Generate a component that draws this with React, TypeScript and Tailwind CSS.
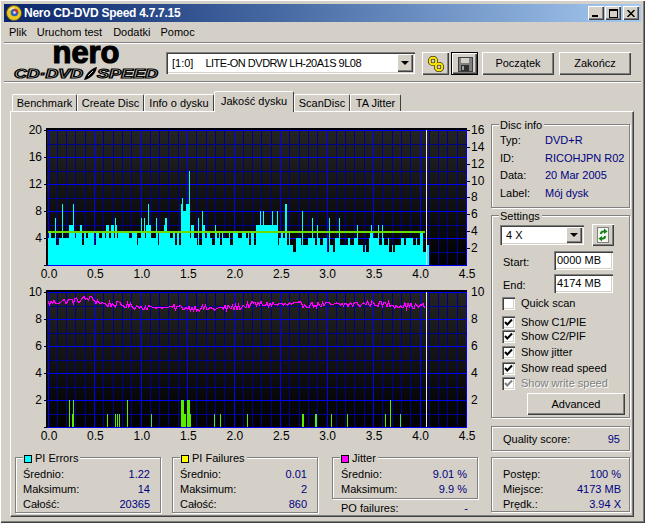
import type { ReactNode } from "react";

const raised = "bg-[#d4d0c8] shadow-[inset_1px_1px_0_#fff,inset_-1px_-1px_0_#404040,inset_-2px_-2px_0_#808080]";
const sunken = "bg-white shadow-[inset_1px_1px_0_#808080,inset_2px_2px_0_#404040,inset_-1px_-1px_0_#fff,inset_-2px_-2px_0_#d4d0c8]";
const etched = "relative border border-[#808080] shadow-[inset_1px_1px_0_#fff,1px_1px_0_#fff]";

// pseudo random so the picture is the same on every load
function makeRandom(seed: number) {
  let s = seed;
  return () => {
    s = (s * 1664525 + 1013904223) % 4294967296;
    return s / 4294967296;
  };
}

function pick(r: number, table: [number, number][]) {
  let sum = 0;
  for (const [v, p] of table) {
    sum += p;
    if (r < sum) return v;
  }
  return table[table.length - 1][0];
}

function buildErrors() {
  const rnd = makeRandom(77);
  const out: number[] = [];
  let x = 48;
  while (x <= 426) {
    const run = 1 + Math.floor(rnd() * 3);
    let table: [number, number][];
    if (x < 210) table = [[3, 0.14], [4, 0.36], [5, 0.36], [6, 0.12], [2, 0.02]];
    else if (x < 256) table = [[3, 0.25], [4, 0.35], [5, 0.3], [6, 0.1]];
    else if (x < 277) table = [[6, 1]];
    else if (x < 330) table = [[3, 0.5], [4, 0.35], [5, 0.1], [2, 0.05]];
    else table = [[3, 0.58], [4, 0.24], [5, 0.08], [2, 0.1]];
    const v = pick(rnd(), table);
    for (let i = 0; i < run; i++) out[x++ - 48] = v;
  }
  const spikes: [number, number][] = [
    [55, 7], [62, 9], [73, 9], [115, 7], [141, 7], [144, 7], [148, 9], [156, 7], [165, 7], [166, 7],
    [181, 9], [182, 10], [183, 8], [184, 8], [185, 8], [186, 9], [187, 9], [188, 9], [189, 14], [198, 7], [202, 8],
    [260, 8], [263, 8], [272, 8], [277, 8], [285, 9], [286, 9], [302, 8], [312, 7], [317, 6], [329, 7], [339, 7],
    [357, 6], [371, 6], [378, 6], [382, 6],
  ];
  for (const [px, v] of spikes) out[px - 48] = v;
  return out;
}

function buildJitter() {
  const rnd = makeRandom(1234);
  const anchors: [number, number][] = [
    [48, 9.2], [60, 9.3], [75, 9.35], [90, 9.55], [94, 9.4], [105, 9.1], [120, 9.05], [140, 8.9], [155, 8.85],
    [187, 8.85], [215, 8.75], [240, 8.9], [255, 9.1], [300, 9.05], [340, 9.05], [375, 9.15], [400, 9.0], [425, 8.95],
  ];
  const pts: string[] = [];
  for (let x = 48; x <= 425; x += 1.5) {
    let i = 0;
    while (i < anchors.length - 2 && anchors[i + 1][0] < x) i++;
    const [x0, y0] = anchors[i];
    const [x1, y1] = anchors[i + 1];
    const noise = (rnd() - 0.5) * (x > 150 && x < 170 ? 0.12 : 0.45);
    const v = y0 + ((y1 - y0) * (x - x0)) / (x1 - x0) + noise;
    pts.push(`${x},${(427 - v * 13.5).toFixed(1)}`);
  }
  return pts.join(" ");
}

const errors = buildErrors();
const jitter = buildJitter();
const xLabels = ["0.0", "0.5", "1.0", "1.5", "2.0", "2.5", "3.0", "3.5", "4.0", "4.5"];

const failures: [number, number, number][] = [
  [69, 1, 2], [72, 2, 1], [73, 1, 2], [107, 1, 1], [115, 1, 1], [117, 1, 1], [119, 1, 1], [127, 1, 2], [151, 1, 1],
  [181, 3, 2], [184, 2, 1], [187, 3, 2], [190, 1, 1], [214, 1, 1], [220, 1, 1], [247, 1, 1],
  [302, 2, 1], [315, 2, 1], [331, 1, 1], [347, 1, 1], [385, 1, 1], [390, 1, 2], [400, 1, 1],
];

function Grid({ id, top, bottom, bright }: { id: string; top: number; bottom: number; bright: (i: number) => boolean }) {
  const step = (bottom - top) / 10;
  return (
    <g shapeRendering="crispEdges">
      <defs>
        <linearGradient id={id} x1="0" y1="0" x2="0" y2="1">
          <stop offset="0" stopColor="#242424" />
          <stop offset="0.45" stopColor="#141414" />
          <stop offset="1" stopColor="#000000" />
        </linearGradient>
      </defs>
      <rect x={46} y={top - 1} width={421} height={bottom - top + 2} fill={`url(#${id})`} />
      <rect x={46} y={top - 2} width={421} height={2} fill="#000" />
      <rect x={46} y={top - 1} width={1} height={bottom - top + 2} fill="#000" />
      {Array.from({ length: 46 }, (_, i) => (
        <rect
          key={i}
          x={Math.round(47.5 + i * 9.3)}
          y={top}
          width={1}
          height={bottom - top}
          fill={i % 5 === 0 ? "#0000ff" : "#000090"}
        />
      ))}
      {Array.from({ length: 11 }, (_, i) => (
        <rect key={i} x={47} y={Math.round(top + i * step)} width={420} height={1} fill={bright(i) ? "#0000ff" : "#000090"} />
      ))}
    </g>
  );
}

function AxisText({ x, y, anchor, children }: { x: number; y: number; anchor: "start" | "middle" | "end"; children: ReactNode }) {
  return (
    <text x={x} y={y + 4} textAnchor={anchor} fontSize={12} fill="#000">
      {children}
    </text>
  );
}

function TopChart() {
  return (
    <svg width={479} height={160} viewBox="11 122 479 160">
      <Grid id="bgTop" top={130} bottom={265} bright={(i) => i % 2 === 0 || i === 0} />
      <g shapeRendering="crispEdges">
        {errors.map((v, i) => (
          <rect key={i} x={48 + i} y={265 - v * 6.75} width={1} height={v * 6.75} fill="#00ffff" />
        ))}
        <rect x={48} y={231} width={377} height={2} fill="#6cdc00" />
        <rect x={426} y={130} width={1} height={135} fill="#e8e8e8" />
        <rect x={47} y={265} width={420} height={1} fill="#0000ff" />
        {[130, 157, 184, 211, 238, 265].map((y) => (
          <rect key={y} x={44} y={y} width={3} height={1} fill="#000" />
        ))}
        {[130, 147, 164, 181, 197, 214, 231, 248].map((y) => (
          <rect key={y} x={467} y={y} width={3} height={1} fill="#000" />
        ))}
      </g>
      {[["20", 130], ["16", 157], ["12", 184], ["8", 211], ["4", 238]].map(([t, y]) => (
        <AxisText key={t} x={42} y={y as number} anchor="end">{t}</AxisText>
      ))}
      {[["16", 130], ["14", 147], ["12", 164], ["10", 181], ["8", 197], ["6", 214], ["4", 231], ["2", 248]].map(([t, y]) => (
        <AxisText key={t} x={471} y={y as number} anchor="start">{t}</AxisText>
      ))}
      {xLabels.map((t, i) => (
        <AxisText key={t} x={49 + i * 46.45} y={274} anchor="middle">{t}</AxisText>
      ))}
    </svg>
  );
}

function BottomChart() {
  return (
    <svg width={479} height={162} viewBox="11 282 479 162">
      <Grid id="bgBottom" top={292} bottom={427} bright={(i) => i % 2 === 0} />
      <g shapeRendering="crispEdges">
        {failures.map(([x, w, v]) => (
          <rect key={x} x={x} y={427 - v * 13.5} width={w} height={v * 13.5} fill="#55ee00" />
        ))}
        <rect x={426} y={292} width={1} height={135} fill="#e8e8e8" />
        <rect x={47} y={427} width={420} height={1} fill="#0000ff" />
        {[292, 319, 346, 373, 400, 427].map((y) => (
          <rect key={y} x={44} y={y} width={3} height={1} fill="#000" />
        ))}
      </g>
      <polyline points={jitter} fill="none" stroke="#ff00ff" strokeWidth={1.2} shapeRendering="crispEdges" />
      {[["10", 292], ["8", 319], ["6", 346], ["4", 373], ["2", 400]].map(([t, y]) => (
        <AxisText key={t} x={42} y={y as number} anchor="end">{t}</AxisText>
      ))}
      {[["10", 292], ["8", 319], ["6", 346], ["4", 373], ["2", 400]].map(([t, y]) => (
        <AxisText key={t} x={471} y={y as number} anchor="start">{t}</AxisText>
      ))}
      {xLabels.map((t, i) => (
        <AxisText key={t} x={49 + i * 46.45} y={436} anchor="middle">{t}</AxisText>
      ))}
    </svg>
  );
}

function NeroLogo() {
  return (
    <svg width={150} height={37} viewBox="10 44 150 37" className="overflow-visible">
      <text x={86} y={63} textAnchor="middle" fontSize={31} fontWeight={700} stroke="#000" strokeWidth={1.2} fill="#000" textLength={67} lengthAdjust="spacingAndGlyphs">
        nero
      </text>
      <text x={14} y={78} fontSize={12} fontWeight={700} fontStyle="italic" fill="#d4d0c8" stroke="#000" strokeWidth={1.1} textLength={69} lengthAdjust="spacingAndGlyphs">
        CD·DVD
      </text>
      <path d="M84 80 C86 73 92 68 97 67 C96 74 90 79 84 80Z" fill="#000" />
      <path d="M88 76 L93 71" stroke="#d4d0c8" strokeWidth={1} />
      <text x={97} y={78} fontSize={12} fontWeight={700} fontStyle="italic" fill="#d4d0c8" stroke="#000" strokeWidth={1.1} textLength={61} lengthAdjust="spacingAndGlyphs">
        SPEED
      </text>
    </svg>
  );
}

function TitleIcon() {
  return (
    <svg width={16} height={16} viewBox="0 0 16 16" className="shrink-0">
      <circle cx={8} cy={8} r={7.5} fill="#e8c820" stroke="#6b5a10" strokeWidth={0.8} />
      <path d="M3 5 A6 6 0 0 1 9 2.4 L8 6Z" fill="#f8f0a0" />
      <circle cx={8.5} cy={7.5} r={3.8} fill="#3060c0" />
      <path d="M8.5 3.7 A3.8 3.8 0 0 1 12.3 7.5 L8.5 7.5Z" fill="#d83020" />
      <circle cx={8.5} cy={7.5} r={1.3} fill="#e8e8e8" />
    </svg>
  );
}

function LinksIcon() {
  return (
    <svg width={18} height={16} viewBox="0 0 18 16">
      <circle cx={6} cy={5} r={3.4} fill="none" stroke="#000" strokeWidth={3.4} />
      <circle cx={12} cy={11} r={3.4} fill="none" stroke="#000" strokeWidth={3.4} />
      <circle cx={6} cy={5} r={3.4} fill="none" stroke="#ffe800" strokeWidth={2.2} />
      <circle cx={12} cy={11} r={3.4} fill="none" stroke="#ffe800" strokeWidth={2.2} />
    </svg>
  );
}

function SaveIcon() {
  return (
    <svg width={16} height={16} viewBox="0 0 16 16" shapeRendering="crispEdges">
      <rect x={1} y={1} width={14} height={14} fill="#808080" />
      <rect x={1} y={1} width={14} height={14} fill="none" stroke="#404040" />
      <rect x={4} y={2} width={8} height={5} fill="#d4d0c8" />
      <rect x={4} y={9} width={8} height={6} fill="#303030" />
      <rect x={5} y={10} width={2} height={4} fill="#a0a0a0" />
    </svg>
  );
}

function RefreshIcon() {
  return (
    <svg width={14} height={16} viewBox="0 0 14 16">
      <rect x={1.5} y={0.5} width={11} height={15} fill="#f4f4f0" stroke="#808080" />
      <path d="M4 7 C4 4 6 3.5 8 3.5 L8 1.5 L11.5 4.5 L8 7 L8 5.3 C6.5 5.3 6 6 6 7Z" fill="#108010" />
      <path d="M10 9 C10 12 8 12.5 6 12.5 L6 14.5 L2.5 11.5 L6 9 L6 10.7 C7.5 10.7 8 10 8 9Z" fill="#108010" />
    </svg>
  );
}

function Arrow() {
  return <div className="h-0 w-0 border-x-[4px] border-t-[4px] border-x-transparent border-t-black" />;
}

function Combo({ className, children }: { className: string; children: ReactNode }) {
  return (
    <div className={`${sunken} ${className} flex items-center justify-between pl-[6px] pr-[2px] whitespace-pre`}>
      <div>{children}</div>
      <div className={`${raised} flex h-[calc(100%-4px)] w-[16px] items-center justify-center`}>
        <Arrow />
      </div>
    </div>
  );
}

function WinButton({ children }: { children: ReactNode }) {
  return <div className={`${raised} flex h-[14px] w-[16px] items-center justify-center`}>{children}</div>;
}

function Tab({ label, width, active }: { label: string; width: string; active?: boolean }) {
  return (
    <div
      className={`${width} flex items-center justify-center rounded-t-[2px] border-t border-l border-r border-t-white border-l-white border-r-[#404040] ${
        active ? "z-10 -mb-px h-[21px] bg-[#d4d0c8] pb-[2px]" : "h-[17px]"
      }`}
    >
      {label}
    </div>
  );
}

function Legend({ swatch, children }: { swatch?: string; children: ReactNode }) {
  return (
    <div className="absolute -top-[7px] left-[7px] flex h-[15px] items-center bg-[#d4d0c8] pl-[1px] pr-[2px]">
      {swatch && <div className={`${swatch} mr-[3px] h-[8px] w-[8px] border border-black`} />}
      {children}
    </div>
  );
}

function Row({ label, value, className = "h-[15px]" }: { label: string; value: string; className?: string }) {
  return (
    <div className={`${className} flex items-center justify-between`}>
      <span>{label}</span>
      <span className="text-[#000080]">{value}</span>
    </div>
  );
}

function InfoRow({ label, value }: { label: string; value: string }) {
  return (
    <div className="flex h-[17.5px] items-center">
      <span className="w-[45px]">{label}</span>
      <span className="text-[#000080]">{value}</span>
    </div>
  );
}

function Check({ label, className, disabled }: { label: string; className: string; disabled?: boolean }) {
  const mark = disabled ? "#808080" : "#000";
  return (
    <div className={`${className} ml-[2px] flex h-[14px] items-center gap-[6px]`}>
      <div className={`h-[13px] w-[13px] shrink-0 ${sunken} ${disabled ? "bg-[#d4d0c8]" : ""}`}>
        {label !== "Quick scan" && (
          <svg width={13} height={13} viewBox="0 0 13 13">
            <path d="M3 6 L5.3 8.5 L10 3.5" fill="none" stroke={mark} strokeWidth={2} />
          </svg>
        )}
      </div>
      <span className={disabled ? "text-[#808080] [text-shadow:1px_1px_0_#fff]" : ""}>{label}</span>
    </div>
  );
}

function Input({ value }: { value: string }) {
  return <div className={`${sunken} flex h-[19px] w-[59px] items-center pl-[3px]`}>{value}</div>;
}

export default function App() {
  return (
    <div className="h-[523px] w-[645px] overflow-hidden bg-[#d4d0c8] p-[4px] text-[11px] leading-none text-black shadow-[inset_1px_1px_0_#fff,inset_-1px_-1px_0_#404040,inset_-2px_-2px_0_#808080] [font-family:'Liberation_Sans',sans-serif]">
      {/* title bar */}
      <div className="flex h-[18px] items-center bg-gradient-to-r from-[#0a246a] to-[#a6caf0] pl-[2px] pr-[2px]">
        <TitleIcon />
        <div className="ml-[2px] flex-1 text-[12px] font-bold tracking-[-0.27px] text-white">Nero CD-DVD Speed 4.7.7.15</div>
        <WinButton>
          <div className="mt-[6px] mr-[2px] h-[2px] w-[6px] bg-black" />
        </WinButton>
        <div className="ml-px">
          <WinButton>
            <div className="h-[9px] w-[9px] border border-t-2 border-black" />
          </WinButton>
        </div>
        <div className="ml-[2px]">
          <WinButton>
            <svg width={8} height={7} viewBox="0 0 8 7">
              <path d="M0.5 0 L7.5 7 M7.5 0 L0.5 7" stroke="#000" strokeWidth={1.5} />
            </svg>
          </WinButton>
        </div>
      </div>

      {/* menu */}
      <div className="flex h-[20px] items-center pl-[5px]">
        <span>Plik</span>
        <span className="ml-[10px]">Uruchom test</span>
        <span className="ml-[11px]">Dodatki</span>
        <span className="ml-[10px]">Pomoc</span>
      </div>
      <div className="h-[2px] border-t border-b border-t-[#808080] border-b-white" />

      {/* toolbar */}
      <div className="flex h-[37px] items-start pl-[6px]">
        <NeroLogo />
        <Combo className="mt-[8px] ml-[6px] h-[22px] w-[249px]">
          [1:0]<span className="ml-[12px] tracking-[-0.5px]">LITE-ON DVDRW LH-20A1S 9L08</span>
        </Combo>
        <div className={`${raised} mt-[8px] ml-[7px] flex h-[23px] w-[27px] items-center justify-center`}>
          <LinksIcon />
        </div>
        <div className={`${raised} mt-[8px] ml-[2px] flex h-[23px] w-[27px] items-center justify-center border border-black`}>
          <SaveIcon />
        </div>
        <div className={`${raised} mt-[8px] ml-[4px] flex h-[23px] w-[72px] items-center justify-center`}>Początek</div>
        <div className={`${raised} mt-[8px] ml-[5px] flex h-[23px] w-[72px] items-center justify-center`}>Zakończ</div>
      </div>
      <div className="h-[2px] border-t border-b border-t-[#808080] border-b-white" />

      {/* tabs */}
      <div className="flex h-[28px] items-end pl-[8px]">
        <Tab label="Benchmark" width="w-[65px]" />
        <Tab label="Create Disc" width="w-[67px]" />
        <Tab label="Info o dysku" width="w-[70px]" />
        <Tab label="Jakość dysku" width="w-[80px]" active />
        <Tab label="ScanDisc" width="w-[56px]" />
        <Tab label="TA Jitter" width="w-[51px]" />
      </div>

      {/* tab page */}
      <div className="ml-[6px] flex h-[406px] w-[624px] border border-t-white border-l-white border-r-[#404040] border-b-[#404040] shadow-[inset_-1px_-1px_0_#808080]">
        <div className="w-[479px] pt-[10px]">
          <TopChart />
          <BottomChart />
          <div className="mt-[13px] flex items-start pl-[4px]">
            <div className={`${etched} h-[56px] w-[146px] pt-[9px] pl-[7px] pr-[10px]`}>
              <Legend swatch="bg-[#00ffff]">PI Errors</Legend>
              <Row label="Średnio:" value="1.22" />
              <Row label="Maksimum:" value="14" />
              <Row label="Całość:" value="20365" />
            </div>
            <div className={`${etched} ml-[11px] h-[56px] w-[146px] pt-[9px] pl-[7px] pr-[10px]`}>
              <Legend swatch="bg-[#ffff00]">PI Failures</Legend>
              <Row label="Średnio:" value="0.01" />
              <Row label="Maksimum:" value="2" />
              <Row label="Całość:" value="860" />
            </div>
            <div className="ml-[14px] w-[146px]">
              <div className={`${etched} h-[42px] pt-[9px] pl-[8px] pr-[10px]`}>
                <Legend swatch="bg-[#ff00ff]">Jitter</Legend>
                <Row label="Średnio:" value="9.01 %" />
                <Row label="Maksimum:" value="9.9 %" />
              </div>
              <div className="mt-[2px] pl-[9px] pr-[10px]">
                <Row label="PO failures:" value="-" />
              </div>
            </div>
          </div>
        </div>

        <div className="ml-px w-[139px] pt-[12px]">
          <div className={`${etched} h-[84px] pt-[7px] pl-[8px]`}>
            <Legend>Disc info</Legend>
            <InfoRow label="Typ:" value="DVD+R" />
            <InfoRow label="ID:" value="RICOHJPN R02" />
            <InfoRow label="Data:" value="20 Mar 2005" />
            <InfoRow label="Label:" value="Mój dysk" />
          </div>

          <div className={`${etched} mt-[7px] h-[203px] pt-[8px] pl-[8px]`}>
            <Legend>Settings</Legend>
            <div className="flex items-start">
              <Combo className="mt-px h-[20px] w-[84px]">4 X</Combo>
              <div className={`${raised} ml-[8px] flex h-[22px] w-[22px] items-center justify-center`}>
                <RefreshIcon />
              </div>
            </div>
            <div className="mt-[5px] flex items-center">
              <span className="mt-[4px] ml-[3px] w-[51px]">Start:</span>
              <Input value="0000 MB" />
            </div>
            <div className="mt-[4px] flex items-center">
              <span className="mt-[4px] ml-[3px] w-[51px]">End:</span>
              <Input value="4174 MB" />
            </div>
            <Check label="Quick scan" className="mt-[3px]" />
            <Check label="Show C1/PIE" className="mt-[5px]" />
            <Check label="Show C2/PIF" className="mt-0" />
            <Check label="Show jitter" className="mt-[2px]" />
            <Check label="Show read speed" className="mt-[2px]" />
            <Check label="Show write speed" className="mt-px" disabled />
            <div className={`${raised} mt-[3px] ml-[27px] flex h-[22px] w-[98px] items-center justify-center`}>Advanced</div>
          </div>

          <div className={`${etched} mt-[8px] flex h-[25px] items-center pt-px pl-[11px] pr-[9px]`}>
            <Row label="Quality score:" value="95" className="h-[15px] w-full" />
          </div>

          <div className={`${etched} mt-[6px] h-[55px] pt-[9px] pl-[11px] pr-[8px]`}>
            <Row label="Postęp:" value="100 %" />
            <Row label="Miejsce:" value="4173 MB" />
            <Row label="Prędk.:" value="3.94 X" />
          </div>
        </div>
      </div>
    </div>
  );
}
